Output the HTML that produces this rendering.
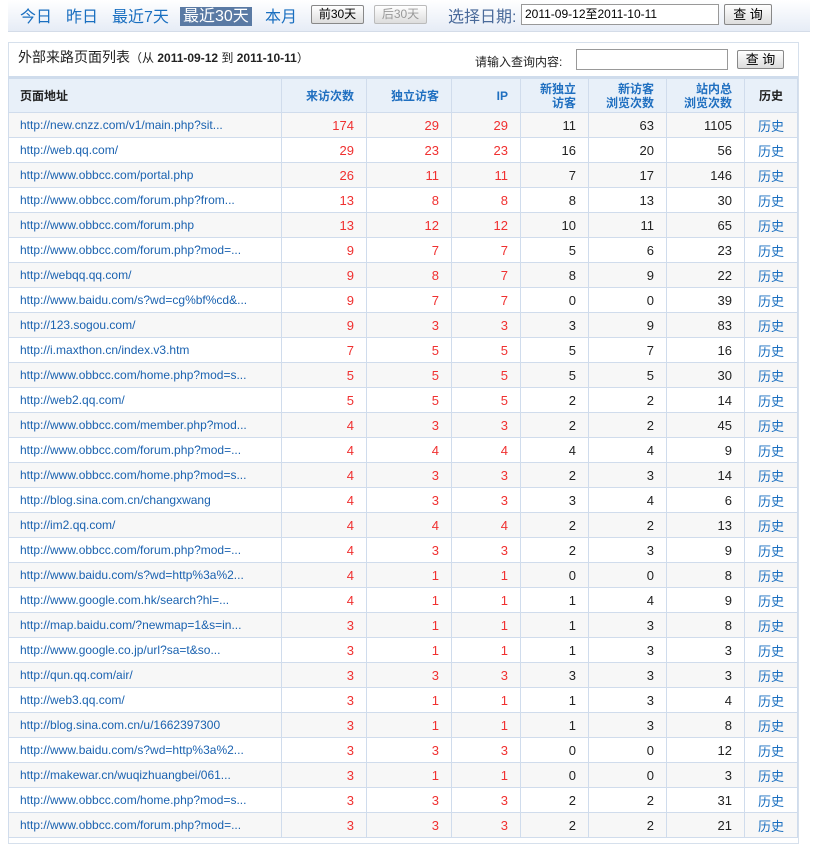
<!DOCTYPE html>
<html><head><meta charset="utf-8"><style>
body{margin:0;width:823px;height:831px;overflow:hidden;background:#fff;font-family:"Liberation Sans","Noto Sans CJK SC",sans-serif;font-size:12px}
.top{position:absolute;left:8px;top:0;width:802px;height:31px;background:linear-gradient(#fff,#e6ecf6);border-bottom:1px solid #d4dce8}
.nav{position:absolute;top:3px;font-size:16px;color:#1a6fc0;white-space:nowrap}
.on{background:#5a7aa4;color:#fff;padding:1px 3px}
.btn{position:absolute;border:1px solid #888;border-radius:2px;background:linear-gradient(#fff,#ddd);font-size:12px;text-align:center;line-height:17px;height:17px}
.panel{position:absolute;left:8px;top:42px;width:789px;border:1px solid #d6e0ec;height:800px}
table{position:absolute;left:8px;top:76px;border-collapse:collapse;table-layout:fixed;width:789px}
td,th{border:1px solid #d0dcec;height:24px;padding:0 12px 0 0;text-align:right;font-size:12px;font-weight:normal}
th{background:#e8f0f9;color:#1f6fc0;font-weight:bold;height:33px;line-height:14px;font-size:12px}
tr.h th{border-top:3px solid #cfdcec}
td.u{text-align:left;padding-left:11px;color:#1a62b0;font-size:12px;white-space:nowrap;overflow:hidden}
td.r{color:#f03030;font-size:13px;font-weight:normal}
td.b{color:#222;font-size:13px;font-weight:normal}
td.l{text-align:center;padding:0;color:#1a6fc0;font-size:13px}
tr:nth-child(even) td{background:#f7f7f7}
</style></head><body>
<div class="top"></div>
<div class="nav" style="left:20px">今日</div>
<div class="nav" style="left:66px">昨日</div>
<div class="nav" style="left:112px">最近7天</div>
<div class="nav" style="left:180px;top:2px"><span class="on">最近30天</span></div>
<div class="nav" style="left:265px">本月</div>
<div class="btn" style="left:311px;top:5px;width:51px">前30天</div>
<div class="btn" style="left:374px;top:5px;width:51px;color:#999;border-color:#bbb">后30天</div>
<div class="nav" style="left:448px;color:#4a6a9a">选择日期:</div>
<div style="position:absolute;left:521px;top:4px;width:193px;height:19px;border:1px solid #999;background:#fff;font-size:12px;line-height:19px;padding-left:3px">2011-09-12至2011-10-11</div>
<div class="btn" style="left:724px;top:4px;width:46px;height:19px;line-height:19px;font-size:13px">查 询</div>
<div class="panel"></div>
<div style="position:absolute;left:18px;top:47px;font-size:14px;color:#222">外部来路页面列表<span style="font-size:12px">（从 <b>2011-09-12</b> 到 <b>2011-10-11</b>）</span></div>
<div style="position:absolute;left:475px;top:53px;color:#222">请输入查询内容:</div>
<div style="position:absolute;left:576px;top:49px;width:150px;height:19px;border:1px solid #999"></div>
<div class="btn" style="left:737px;top:50px;width:45px;height:17px;font-size:13px">查 询</div>
<table>
<colgroup><col style="width:273px"><col style="width:85px"><col style="width:85px"><col style="width:69px"><col style="width:68px"><col style="width:78px"><col style="width:78px"><col style="width:53px"></colgroup>
<tr class="h"><th style="text-align:left;padding-left:11px;color:#222">页面地址</th><th>来访次数</th><th>独立访客</th><th>IP</th><th>新独立<br>访客</th><th>新访客<br>浏览次数</th><th>站内总<br>浏览次数</th><th style="text-align:center;padding:0;color:#222">历史</th></tr>
<tr><td class="u">http://new.cnzz.com/v1/main.php?sit...</td><td class="r">174</td><td class="r">29</td><td class="r">29</td><td class="b">11</td><td class="b">63</td><td class="b">1105</td><td class="l">历史</td></tr>
<tr><td class="u">http://web.qq.com/</td><td class="r">29</td><td class="r">23</td><td class="r">23</td><td class="b">16</td><td class="b">20</td><td class="b">56</td><td class="l">历史</td></tr>
<tr><td class="u">http://www.obbcc.com/portal.php</td><td class="r">26</td><td class="r">11</td><td class="r">11</td><td class="b">7</td><td class="b">17</td><td class="b">146</td><td class="l">历史</td></tr>
<tr><td class="u">http://www.obbcc.com/forum.php?from...</td><td class="r">13</td><td class="r">8</td><td class="r">8</td><td class="b">8</td><td class="b">13</td><td class="b">30</td><td class="l">历史</td></tr>
<tr><td class="u">http://www.obbcc.com/forum.php</td><td class="r">13</td><td class="r">12</td><td class="r">12</td><td class="b">10</td><td class="b">11</td><td class="b">65</td><td class="l">历史</td></tr>
<tr><td class="u">http://www.obbcc.com/forum.php?mod=...</td><td class="r">9</td><td class="r">7</td><td class="r">7</td><td class="b">5</td><td class="b">6</td><td class="b">23</td><td class="l">历史</td></tr>
<tr><td class="u">http://webqq.qq.com/</td><td class="r">9</td><td class="r">8</td><td class="r">7</td><td class="b">8</td><td class="b">9</td><td class="b">22</td><td class="l">历史</td></tr>
<tr><td class="u">http://www.baidu.com/s?wd=cg%bf%cd&amp;...</td><td class="r">9</td><td class="r">7</td><td class="r">7</td><td class="b">0</td><td class="b">0</td><td class="b">39</td><td class="l">历史</td></tr>
<tr><td class="u">http://123.sogou.com/</td><td class="r">9</td><td class="r">3</td><td class="r">3</td><td class="b">3</td><td class="b">9</td><td class="b">83</td><td class="l">历史</td></tr>
<tr><td class="u">http://i.maxthon.cn/index.v3.htm</td><td class="r">7</td><td class="r">5</td><td class="r">5</td><td class="b">5</td><td class="b">7</td><td class="b">16</td><td class="l">历史</td></tr>
<tr><td class="u">http://www.obbcc.com/home.php?mod=s...</td><td class="r">5</td><td class="r">5</td><td class="r">5</td><td class="b">5</td><td class="b">5</td><td class="b">30</td><td class="l">历史</td></tr>
<tr><td class="u">http://web2.qq.com/</td><td class="r">5</td><td class="r">5</td><td class="r">5</td><td class="b">2</td><td class="b">2</td><td class="b">14</td><td class="l">历史</td></tr>
<tr><td class="u">http://www.obbcc.com/member.php?mod...</td><td class="r">4</td><td class="r">3</td><td class="r">3</td><td class="b">2</td><td class="b">2</td><td class="b">45</td><td class="l">历史</td></tr>
<tr><td class="u">http://www.obbcc.com/forum.php?mod=...</td><td class="r">4</td><td class="r">4</td><td class="r">4</td><td class="b">4</td><td class="b">4</td><td class="b">9</td><td class="l">历史</td></tr>
<tr><td class="u">http://www.obbcc.com/home.php?mod=s...</td><td class="r">4</td><td class="r">3</td><td class="r">3</td><td class="b">2</td><td class="b">3</td><td class="b">14</td><td class="l">历史</td></tr>
<tr><td class="u">http://blog.sina.com.cn/changxwang</td><td class="r">4</td><td class="r">3</td><td class="r">3</td><td class="b">3</td><td class="b">4</td><td class="b">6</td><td class="l">历史</td></tr>
<tr><td class="u">http://im2.qq.com/</td><td class="r">4</td><td class="r">4</td><td class="r">4</td><td class="b">2</td><td class="b">2</td><td class="b">13</td><td class="l">历史</td></tr>
<tr><td class="u">http://www.obbcc.com/forum.php?mod=...</td><td class="r">4</td><td class="r">3</td><td class="r">3</td><td class="b">2</td><td class="b">3</td><td class="b">9</td><td class="l">历史</td></tr>
<tr><td class="u">http://www.baidu.com/s?wd=http%3a%2...</td><td class="r">4</td><td class="r">1</td><td class="r">1</td><td class="b">0</td><td class="b">0</td><td class="b">8</td><td class="l">历史</td></tr>
<tr><td class="u">http://www.google.com.hk/search?hl=...</td><td class="r">4</td><td class="r">1</td><td class="r">1</td><td class="b">1</td><td class="b">4</td><td class="b">9</td><td class="l">历史</td></tr>
<tr><td class="u">http://map.baidu.com/?newmap=1&amp;s=in...</td><td class="r">3</td><td class="r">1</td><td class="r">1</td><td class="b">1</td><td class="b">3</td><td class="b">8</td><td class="l">历史</td></tr>
<tr><td class="u">http://www.google.co.jp/url?sa=t&amp;so...</td><td class="r">3</td><td class="r">1</td><td class="r">1</td><td class="b">1</td><td class="b">3</td><td class="b">3</td><td class="l">历史</td></tr>
<tr><td class="u">http://qun.qq.com/air/</td><td class="r">3</td><td class="r">3</td><td class="r">3</td><td class="b">3</td><td class="b">3</td><td class="b">3</td><td class="l">历史</td></tr>
<tr><td class="u">http://web3.qq.com/</td><td class="r">3</td><td class="r">1</td><td class="r">1</td><td class="b">1</td><td class="b">3</td><td class="b">4</td><td class="l">历史</td></tr>
<tr><td class="u">http://blog.sina.com.cn/u/1662397300</td><td class="r">3</td><td class="r">1</td><td class="r">1</td><td class="b">1</td><td class="b">3</td><td class="b">8</td><td class="l">历史</td></tr>
<tr><td class="u">http://www.baidu.com/s?wd=http%3a%2...</td><td class="r">3</td><td class="r">3</td><td class="r">3</td><td class="b">0</td><td class="b">0</td><td class="b">12</td><td class="l">历史</td></tr>
<tr><td class="u">http://makewar.cn/wuqizhuangbei/061...</td><td class="r">3</td><td class="r">1</td><td class="r">1</td><td class="b">0</td><td class="b">0</td><td class="b">3</td><td class="l">历史</td></tr>
<tr><td class="u">http://www.obbcc.com/home.php?mod=s...</td><td class="r">3</td><td class="r">3</td><td class="r">3</td><td class="b">2</td><td class="b">2</td><td class="b">31</td><td class="l">历史</td></tr>
<tr><td class="u">http://www.obbcc.com/forum.php?mod=...</td><td class="r">3</td><td class="r">3</td><td class="r">3</td><td class="b">2</td><td class="b">2</td><td class="b">21</td><td class="l">历史</td></tr>
</table>
</body></html>
